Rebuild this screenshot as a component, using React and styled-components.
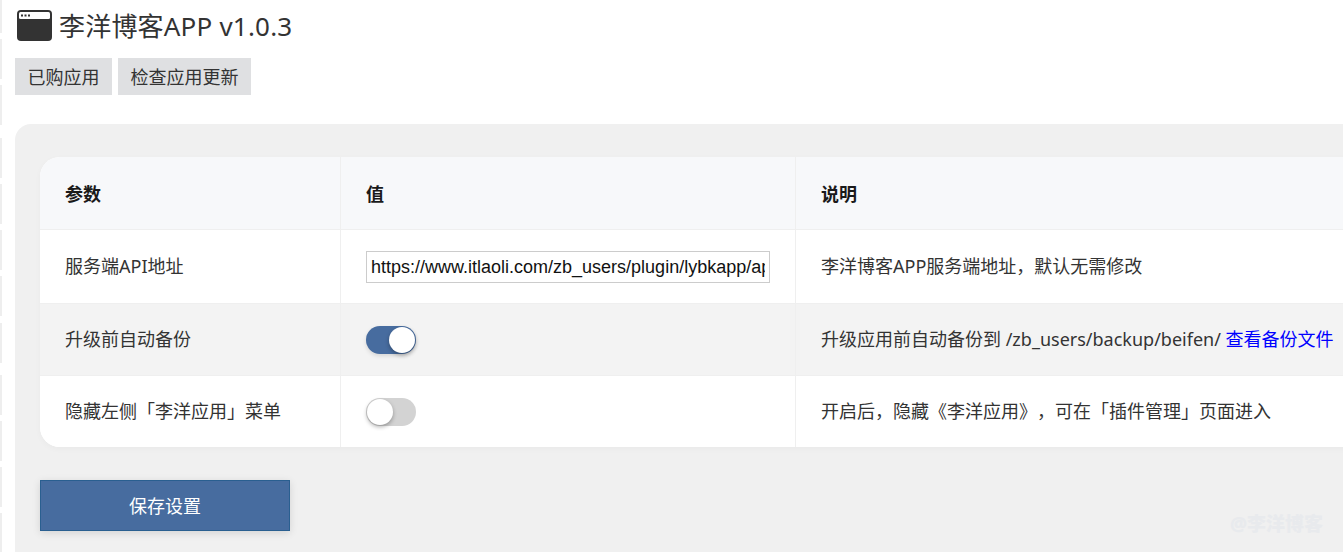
import React from 'react'
import styled, { createGlobalStyle } from 'styled-components'

const GlobalStyle = createGlobalStyle`
  html, body {
    margin: 0;
    padding: 0;
    height: 100%;
    overflow: hidden;
    background: #fff;
  }
  body {
    font-family: "Noto Sans", "Noto Sans CJK SC", sans-serif;
    color: #333;
    text-spacing-trim: space-all;
  }
  table, input, button {
    text-spacing-trim: space-all;
  }
`

const Page = styled.div`
  display: flex;
  width: 1343px;
  height: 552px;
  overflow: hidden;
  position: relative;
`

const Rail = styled.div`
  flex: 0 0 2px;
  display: flex;
  flex-direction: column;
  gap: 6px;
`

const RailItem = styled.div`
  flex: 0 0 ${p => p.$h || 40}px;
  background: #eee;
  margin-top: ${p => p.$gap || 0}px;
`

const Main = styled.main`
  flex: 0 0 1440px;
  padding-left: 13px;
`

const Title = styled.h1`
  display: flex;
  align-items: center;
  gap: 7px;
  margin: 0;
  padding: 2px 0 0 2px;
  height: 49px;
  box-sizing: border-box;
  font-size: 26px;
  font-weight: 400;
  line-height: 36px;
  letter-spacing: 0.2px;
  color: #333;
`

const ToolBar = styled.div`
  display: flex;
  gap: 6px;
  margin-top: 9px;
`

const ToolButton = styled.button`
  height: 37px;
  padding: 0 12.5px 2px;
  border: 0;
  background: #dfe0e2;
  color: #333;
  font: inherit;
  font-size: 18px;
`

const Panel = styled.section`
  margin-top: 29px;
  padding: 33px 25px 60px;
  border-radius: 16px 0 0 0;
  background: #f0f0f0;
`

const Table = styled.table`
  width: 1390px;
  table-layout: fixed;
  border-collapse: separate;
  border-spacing: 0;
  border-radius: 20px;
  overflow: hidden;
  background: #fff;
  box-shadow: 0 2px 6px rgba(0, 0, 0, 0.03);
`

const Head = styled.th`
  width: ${p => p.$w || 'auto'};
  height: 72px;
  box-sizing: content-box;
  padding: 0 25px;
  background: #f7f8fa;
  border-right: 1px solid #efefef;
  border-bottom: 1px solid #efefef;
  font-size: 18px;
  font-weight: 700;
  text-align: left;
  color: #1a1a1a;
`

const Row = styled.tr`
  background: ${p => (p.$alt ? '#f3f3f3' : '#fff')};
`

const Cell = styled.td`
  height: 71px;
  padding: 0 25px;
  border-right: 1px solid #efefef;
  border-bottom: ${p => (p.$last ? '0' : '1px solid #efefef')};
  font-size: 18px;
  color: #333;
`

// the CJK fallback sits a little low in its line box
const TextCell = styled(Cell)`
  height: 67px;
  padding-bottom: 4px;
`

const TextInput = styled.input`
  display: block;
  width: 404px;
  height: 32px;
  margin: 21px 0 20px;
  padding: 0 4px;
  box-sizing: border-box;
  border: 1px solid #ccc;
  background: #fff;
  color: #111;
  font-family: "Liberation Sans", Arial, sans-serif;
  font-size: 18px;
  outline: none;
`

const Toggle = styled.span`
  display: block;
  position: relative;
  width: 50px;
  height: 28px;
  border-radius: 14px;
  background: ${p => (p.$on ? '#476c9f' : '#d3d3d3')};
  box-shadow: ${p => (p.$on ? '0 2px 4px rgba(0, 0, 0, 0.12)' : 'none')};

  &::after {
    content: '';
    position: absolute;
    top: 1px;
    left: ${p => (p.$on ? '23px' : '1px')};
    width: 26px;
    height: 26px;
    border-radius: 50%;
    background: #fff;
    box-shadow: 0 2px 4px rgba(0, 0, 0, 0.3);
  }
`

const BlueLink = styled.a`
  color: #00f;
  text-decoration: none;
`

const SaveButton = styled.button`
  display: block;
  width: 250px;
  height: 51px;
  margin-top: 33px;
  padding: 0 0 2px;
  border: 1px solid #2a5f90;
  background: #476c9f;
  color: #fff;
  font: inherit;
  font-size: 18px;
  box-shadow: 0 2px 8px rgba(0, 0, 0, 0.12);
`

const Watermark = styled.div`
  position: absolute;
  right: 20px;
  bottom: 16px;
  color: #e8eaed;
  font-size: 19px;
  font-weight: 900;
  line-height: 24px;
`

const railItems = [
  { h: 33 }, {}, {},
  { gap: 7 }, {}, {}, {},
  { gap: 1 },
  { gap: 6 }, {}, {}, {}
]

function WindowIcon() {
  return (
    <svg width="35" height="31" viewBox="0 0 35 31">
      <rect x="0" y="0" width="35" height="31" rx="4" fill="#333" />
      <rect x="2" y="2" width="31" height="7" rx="1.5" fill="#fff" />
      <rect x="4" y="4.5" width="2" height="2" fill="#333" />
      <rect x="7.5" y="4.5" width="2" height="2" fill="#333" />
      <rect x="11" y="4.5" width="2" height="2" fill="#333" />
    </svg>
  )
}

export default function App() {
  return (
    <Page>
      <GlobalStyle />
      <Rail>
        {railItems.map((item, i) => (
          <RailItem key={i} $h={item.h} $gap={item.gap} />
        ))}
      </Rail>
      <Main>
        <Title>
          <WindowIcon />
          李洋博客APP v1.0.3
        </Title>
        <ToolBar>
          <ToolButton>已购应用</ToolButton>
          <ToolButton>检查应用更新</ToolButton>
        </ToolBar>
        <Panel>
          <Table>
            <thead>
              <tr>
                <Head $w="250px">参数</Head>
                <Head $w="404px">值</Head>
                <Head>说明</Head>
              </tr>
            </thead>
            <tbody>
              <Row>
                <TextCell>服务端API地址</TextCell>
                <Cell>
                  <TextInput readOnly value="https://www.itlaoli.com/zb_users/plugin/lybkapp/api.php" />
                </Cell>
                <TextCell>李洋博客APP服务端地址，默认无需修改</TextCell>
              </Row>
              <Row $alt>
                <TextCell>升级前自动备份</TextCell>
                <Cell><Toggle $on /></Cell>
                <TextCell>
                  升级应用前自动备份到 /zb_users/backup/beifen/ <BlueLink href="#">查看备份文件</BlueLink>
                </TextCell>
              </Row>
              <Row>
                <TextCell $last>隐藏左侧「李洋应用」菜单</TextCell>
                <Cell $last><Toggle /></Cell>
                <TextCell $last>开启后，隐藏《李洋应用》，可在「插件管理」页面进入</TextCell>
              </Row>
            </tbody>
          </Table>
          <SaveButton>保存设置</SaveButton>
        </Panel>
      </Main>
      <Watermark>@李洋博客</Watermark>
    </Page>
  )
}
